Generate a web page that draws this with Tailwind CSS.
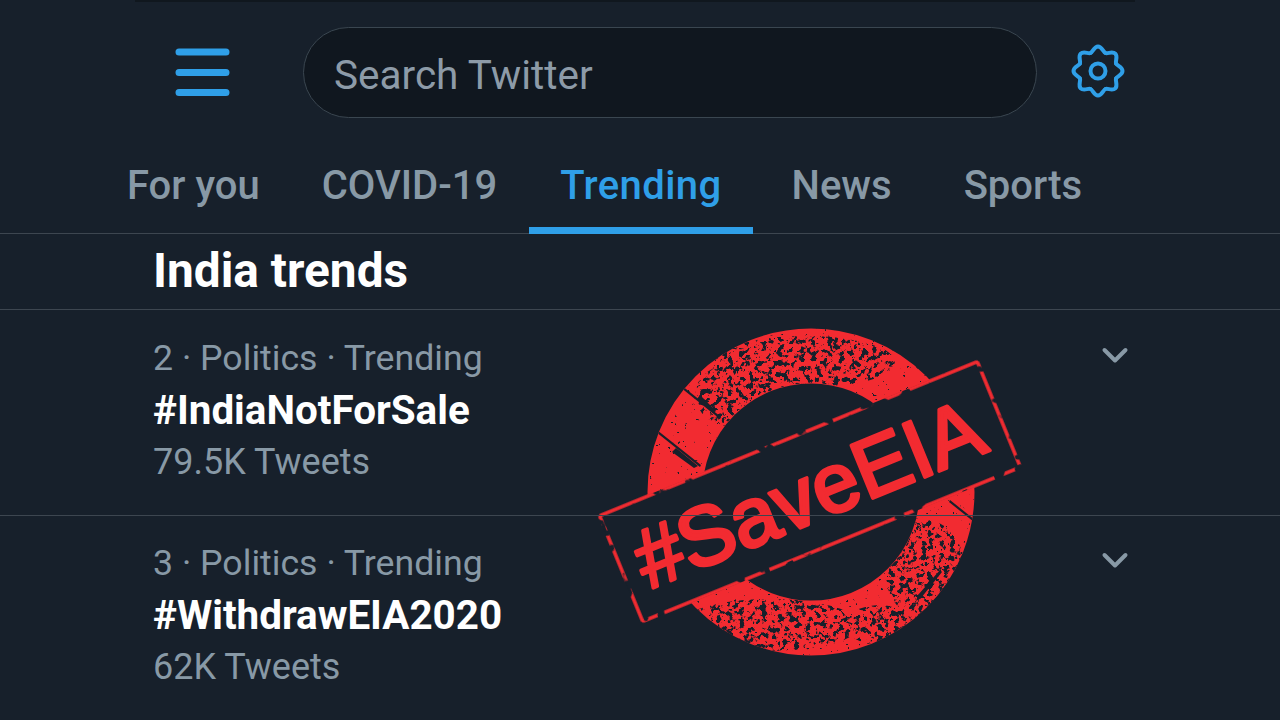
<!doctype html>
<html>
<head>
<meta charset="utf-8">
<script src="https://cdn.jsdelivr.net/npm/@tailwindcss/browser@4"></script>
</head>
<body class="m-0">
<div class="relative w-[1280px] h-[720px] overflow-hidden bg-[#17202b] font-['Roboto',sans-serif]">
  <div class="ml-[135px] w-[1000px] h-[2px] bg-[#10171e]"></div>
  <header class="flex items-center h-[116px] pt-[24px] pl-[175px]">
    <svg class="w-[56px] h-[50px] shrink-0" viewBox="0 0 56 50"><g fill="none" stroke="#2f9fe8" stroke-width="7" stroke-linecap="round"><path d="M4 5H51M4 25.500H51M4 45.500H51"/></g></svg>
    <div class="ml-[72px] w-[734px] h-[91px] shrink-0 flex items-center pl-[30px] pt-[6px] rounded-full bg-[#10171f] border border-[#3a4650] text-[40.500px] text-[#8d9ba8]">Search Twitter</div>
    <svg class="ml-[33px] w-[56px] h-[56px] shrink-0 -mt-[3px]" viewBox="-28 -28 56 56" fill="none" stroke="#2f9fe8" stroke-width="4" stroke-linecap="round">
      <circle r="7.500"/>
      <g>
        <path d="M-7.460-18.020C-5.150-18.980-4-24.500 0-24.500S5.150-18.980 7.460-18.020"/>
        <path transform="rotate(45)" d="M-7.460-18.020C-5.150-18.980-4-24.500 0-24.500S5.150-18.980 7.460-18.020"/>
        <path transform="rotate(90)" d="M-7.460-18.020C-5.150-18.980-4-24.500 0-24.500S5.150-18.980 7.460-18.020"/>
        <path transform="rotate(135)" d="M-7.460-18.020C-5.150-18.980-4-24.500 0-24.500S5.150-18.980 7.460-18.020"/>
        <path transform="rotate(180)" d="M-7.460-18.020C-5.150-18.980-4-24.500 0-24.500S5.150-18.980 7.460-18.020"/>
        <path transform="rotate(225)" d="M-7.460-18.020C-5.150-18.980-4-24.500 0-24.500S5.150-18.980 7.460-18.020"/>
        <path transform="rotate(270)" d="M-7.460-18.020C-5.150-18.980-4-24.500 0-24.500S5.150-18.980 7.460-18.020"/>
        <path transform="rotate(315)" d="M-7.460-18.020C-5.150-18.980-4-24.500 0-24.500S5.150-18.980 7.460-18.020"/>
      </g>
    </svg>
  </header>
  <nav class="flex h-[116px] pt-[42px] pl-[95px] border-b border-[#3d4650] text-[40px] font-medium text-[#8899a6] leading-[52px]">
    <div class="px-[32px] mr-[-2px]">For you</div>
    <div class="px-[32px]">COVID-19</div>
    <div class="relative pl-[31px] pr-[31px] tracking-[0.4px] text-[#2f9fe8]">Trending<div class="absolute left-0 right-0 top-[67px] h-[7px] bg-[#2f9fe8]"></div></div>
    <div class="pl-[39px] pr-[40px]">News</div>
    <div class="px-[32px]">Sports</div>
  </nav>
  <div class="relative z-10 h-[76px] pl-[153px] pt-[11px] border-b border-[#3d4650] text-[47.800px] font-bold text-white leading-[52px]">India trends</div>
  <section class="relative z-10 h-[206px] pl-[153px] pr-[150px] pt-[22px] border-b border-[#3d4650] flex justify-between items-start">
    <div>
      <div class="text-[35.700px] leading-[52px] text-[#8899a6]">2 · Politics · Trending</div>
      <div class="text-[40.400px] leading-[54px] font-bold text-white">#IndiaNotForSale</div>
      <div class="text-[36px] leading-[48px] text-[#8899a6]">79.5K Tweets</div>
    </div>
    <svg class="w-[30px] h-[20px] mt-[14px]" viewBox="0 0 30 20" fill="none" stroke="#8899a6" stroke-width="4" stroke-linecap="round" stroke-linejoin="round"><path d="M4.500 4L15 14.500L25.500 4"/></svg>
  </section>
  <section class="relative z-10 pl-[153px] pr-[150px] pt-[21px] flex justify-between items-start">
    <div>
      <div class="text-[35.700px] leading-[52px] text-[#8899a6]">3 · Politics · Trending</div>
      <div class="text-[40.400px] leading-[54px] font-bold text-white">#WithdrawEIA2020</div>
      <div class="text-[36px] leading-[48px] text-[#8899a6]">62K Tweets</div>
    </div>
    <svg class="w-[30px] h-[20px] mt-[14px]" viewBox="0 0 30 20" fill="none" stroke="#8899a6" stroke-width="4" stroke-linecap="round" stroke-linejoin="round"><path d="M4.500 4L15 14.500L25.500 4"/></svg>
  </section>
  <svg class="absolute left-0 top-0 w-[1280px] h-[720px]" viewBox="0 0 1280 720">
    <defs>
      <filter id="spk" x="-10%" y="-10%" width="120%" height="120%" color-interpolation-filters="sRGB">
        <feTurbulence type="fractalNoise" baseFrequency="0.18" numOctaves="3" seed="7" result="n"/>
        <feColorMatrix in="n" type="matrix" values="0 0 0 0 0 0 0 0 0 0 0 0 0 0 0 8 12 0 0 -10.400" result="m"/>
        <feComposite in="SourceGraphic" in2="m" operator="in"/>
      </filter>
      <filter id="spk2" x="-10%" y="-10%" width="120%" height="120%" color-interpolation-filters="sRGB">
        <feTurbulence type="fractalNoise" baseFrequency="0.32" numOctaves="2" seed="21" result="n"/>
        <feColorMatrix in="n" type="matrix" values="0 0 0 0 0 0 0 0 0 0 0 0 0 0 0 14 14 0 0 -18.500" result="m"/>
        <feComposite in="SourceGraphic" in2="m" operator="in"/>
      </filter>
      <filter id="edge" x="-5%" y="-5%" width="110%" height="110%" color-interpolation-filters="sRGB">
        <feTurbulence type="fractalNoise" baseFrequency="0.08" numOctaves="2" seed="3" result="n"/>
        <feColorMatrix in="n" type="matrix" values="0 0 0 0 0 0 0 0 0 0 0 0 0 0 0 14 0 14 0 -11" result="m"/>
        <feComposite in="SourceGraphic" in2="m" operator="in"/>
      </filter>
      <mask id="ring"><rect width="1280" height="720" fill="#000"/><circle cx="811" cy="492" r="163.500" fill="#fff"/><circle cx="811" cy="492" r="109" fill="#000"/></mask>
    </defs>
    <circle cx="811" cy="492" r="136" fill="none" stroke="#f22b31" stroke-width="55"/>
    <g mask="url(#ring)" fill="#17202b">
      <g filter="url(#spk)">
        <ellipse cx="805" cy="362" rx="90" ry="26"/>
        <ellipse cx="735" cy="395" rx="40" ry="32"/>
        <ellipse cx="770" cy="625" rx="90" ry="26"/>
        <ellipse cx="925" cy="570" rx="40" ry="50"/>
        <ellipse cx="880" cy="625" rx="34" ry="20"/>
      </g>
      <g filter="url(#spk2)"><circle cx="811" cy="492" r="165"/></g>
      <path d="M681 385l40 32-1 2-40-32zM657 430l44 35-1 2-44-35zM950 500l30 24-1 2-30-24z"/>
      <path d="M700 395l16 16-3 2-16-14zM676 448l22 18-4 2-22-16zM918 595l22-25 2 2-21 26-5 3z"/>
    </g>
    <g transform="translate(810 491.500) rotate(-22.200)">
      <rect x="-205" y="-58" width="410" height="116" fill="#17202b"/>
      <rect x="-204" y="-57" width="408" height="114" rx="2" fill="none" stroke="#f22b31" stroke-width="3.500" filter="url(#edge)"/>
      <text x="-2" y="30" text-anchor="middle" font-family="'Liberation Sans',sans-serif" font-size="83" fill="#f22b31" stroke="#f22b31" stroke-width="3.500" stroke-linejoin="round">#SaveEIA</text>
    </g>
    <path d="M598 515.500H975" stroke="#8a8f96" stroke-opacity=".45" stroke-width="1"/>
  </svg>
</div>
</body>
</html>
